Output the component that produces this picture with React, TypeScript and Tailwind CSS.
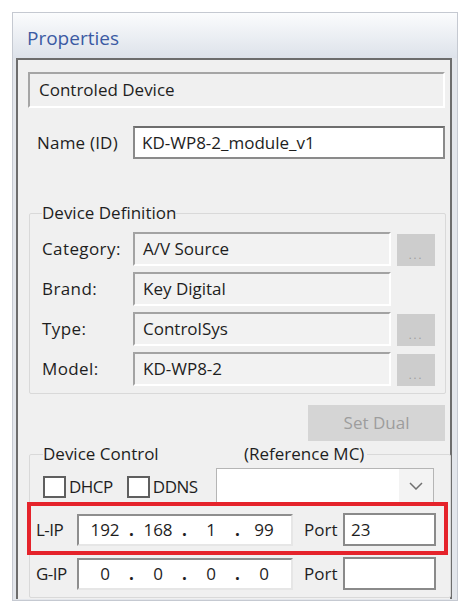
import React from 'react';

const font = { fontFamily: '"Open Sans", "Liberation Sans", sans-serif' };

// sunken read-only field used in Device Definition
const ReadField = ({ value }: { value: string }) => (
  <div className="w-[258px] h-[34px] bg-[#f2f2f2] border-t-2 border-l-2 border-[#a3a3a3] border-b-2 border-r-2 border-b-white border-r-white flex items-center pl-[8px] text-[17px] text-[#1e1e1e]">
    {value}
  </div>
);

const DotsButton = () => (
  <div className="w-[38px] h-[32px] bg-[#cdcdcd] flex items-end justify-center pb-[6px] text-[11px] leading-none tracking-[2px] text-[#9a9a9a]">
    ...
  </div>
);

const DefRow = ({ label, value, button }: { label: string; value: string; button?: boolean }) => (
  <div className="flex items-end gap-[6px]">
    <div className="w-[85px] self-center text-[17px] text-[#1e1e1e] tracking-[0.4px]">{label}</div>
    <ReadField value={value} />
    {button ? <DotsButton /> : <div className="w-[38px]" />}
  </div>
);

const IpBox = ({ parts }: { parts: string[] }) => (
  <div className="w-[216px] h-[32px] bg-white border-t-2 border-l-2 border-[#8e8e8e] border-b-2 border-r-2 border-b-[#e6e6e6] border-r-[#e6e6e6] flex items-center pl-[4px] text-[17px] text-[#1e1e1e]">
    {parts.map((p, i) => (
      <React.Fragment key={i}>
        {i > 0 && <span className="w-[9px] text-center font-bold">.</span>}
        <span className="w-[44px] text-center">{p}</span>
      </React.Fragment>
    ))}
  </div>
);

const PortBox = ({ value }: { value: string }) => (
  <div className="w-[93px] h-[33px] bg-white border-2 border-[#8a8a8a] flex items-center pl-[6px] text-[17px] text-[#1e1e1e]">
    {value}
  </div>
);

const IpRow = ({ label, parts, port }: { label: string; parts: string[]; port: string }) => (
  <div className="flex items-center">
    <div className="w-[41px] text-[17px] text-[#1e1e1e] tracking-[-0.5px]">{label}</div>
    <IpBox parts={parts} />
    <div className="w-[50px] pl-[11px] text-[17px] text-[#1e1e1e]">Port</div>
    <PortBox value={port} />
  </div>
);

const Checkbox = ({ label }: { label: string }) => (
  <div className="flex items-center gap-[3px]">
    <div className="w-[23px] h-[22px] bg-white border-2 border-[#5f5f5f]" />
    <span className="text-[17px] text-[#1e1e1e] tracking-[-0.5px]">{label}</span>
  </div>
);

export default function App() {
  return (
    <div className="min-h-[613px] bg-white pt-[12px] pl-[12px]" style={font}>
      <div className="w-[446px] h-[589px] border border-[#c5c9d1] bg-[#e3e6eb] flex flex-col">
        {/* title */}
        <div className="h-[45px] bg-gradient-to-b from-[#fbfcfd] to-[#dde2ea] flex items-center pt-[5px] pl-[14px] text-[19px] text-[#3b5aa3]">
          Properties
        </div>

        {/* inner panel */}
        <div className="flex-1 ml-[3px] mr-[5px] mb-[1px] bg-[#f0f0f0] border-t-2 border-l-2 border-r-2 border-[#6d6d6d] flex flex-col">
          <div className="mt-[12px] ml-[10px] mr-[5px] h-[36px] bg-[#f0f0f0] border-t-2 border-l-2 border-[#a5a5a5] border-b-2 border-r-2 border-b-white border-r-white flex items-center pl-[9px] text-[17px] text-[#1e1e1e]">
            Controled Device
          </div>

          <div className="mt-[18px] flex items-center">
            <div className="w-[115px] pl-[19px] text-[17px] text-[#1e1e1e] tracking-[0.2px]">Name (ID)</div>
            <div className="w-[312px] h-[33px] bg-white border-2 border-[#8a8a8a] border-t-[#6e6e6e] flex items-center pl-[7px] text-[17px] text-[#1e1e1e]">
              KD-WP8-2_module_v1
            </div>
          </div>

          {/* Device Definition group */}
          <fieldset className="mt-[44px] ml-[11px] w-[417px] border border-[#d9d9d9] rounded-[2px] pl-[12px] pb-[7px]">
            <legend className="px-0 text-[17px] leading-[20px] text-[#1e1e1e]">Device Definition</legend>
            <div className="mt-[9px] flex flex-col gap-[6px]">
              <DefRow label="Category:" value="A/V Source" button />
              <DefRow label="Brand:" value="Key Digital" />
              <DefRow label="Type:" value="ControlSys" button />
              <DefRow label="Model:" value="KD-WP8-2" button />
            </div>
          </fieldset>

          <div className="mt-[11px] mr-[5px] self-end w-[137px] h-[36px] bg-[#d5d5d5] flex items-center justify-center text-[17px] text-[#9d9d9d]">
            Set Dual
          </div>

          {/* Device Control group */}
          <fieldset className="mt-[3px] ml-[11px] w-[418px] border border-[#d9d9d9] rounded-[2px] pl-[13px] pb-[7px]">
            <legend className="px-0 text-[17px] leading-[20px] text-[#1e1e1e]">
              <span className="inline-block w-[201px]">Device Control</span>
              <span className="pr-[3px]">(Reference MC)</span>
            </legend>
            <div className="flex items-start mt-[4px]">
              <div className="flex items-center gap-[14px] mt-[6px]">
                <Checkbox label="DHCP" />
                <Checkbox label="DDNS" />
              </div>
              <div className="ml-[18px] w-[218px] h-[35px] bg-white border border-[#b5b5b5] flex justify-end">
                <div className="w-[34px] h-full bg-[#f3f3f3] flex items-center justify-center">
                  <svg width="14" height="8" viewBox="0 0 14 8">
                    <path d="M1 1 L7 7 L13 1" fill="none" stroke="#707070" strokeWidth="1.5" />
                  </svg>
                </div>
              </div>
            </div>

            <div className="relative -ml-[7px] mt-[10px] w-[414px]">
              <IpRow label="L-IP" parts={['192', '168', '1', '99']} port="23" />
              {/* red highlight annotation */}
              <div className="absolute -left-[9px] -top-[11px] w-[421px] h-[53px] border-[4px] border-[#e5232b] pointer-events-none" />
            </div>

            <div className="-ml-[7px] mt-[11px]">
              <IpRow label="G-IP" parts={['0', '0', '0', '0']} port="" />
            </div>
          </fieldset>
        </div>
      </div>
    </div>
  );
}
